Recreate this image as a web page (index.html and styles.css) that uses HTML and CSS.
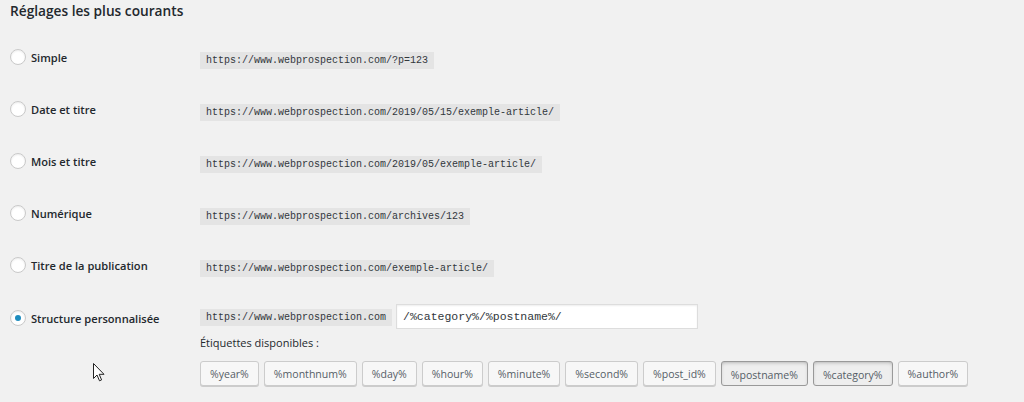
FILE: index.html
```html
<!DOCTYPE html>
<html lang="fr">
<head>
<meta charset="utf-8">
<link rel="stylesheet" href="styles.css">
</head>
<body>
<div class="page">
  <h2 class="title">Réglages les plus courants</h2>
  <div class="rows">
    <div class="row">
      <label class="lbl"><span class="radio"></span>Simple</label>
      <div class="val"><code class="code">https://www.webprospection.com/?p=123</code></div>
    </div>
    <div class="row">
      <label class="lbl"><span class="radio"></span>Date et titre</label>
      <div class="val"><code class="code">https://www.webprospection.com/2019/05/15/exemple-article/</code></div>
    </div>
    <div class="row">
      <label class="lbl"><span class="radio"></span>Mois et titre</label>
      <div class="val"><code class="code">https://www.webprospection.com/2019/05/exemple-article/</code></div>
    </div>
    <div class="row">
      <label class="lbl"><span class="radio"></span>Numérique</label>
      <div class="val"><code class="code">https://www.webprospection.com/archives/123</code></div>
    </div>
    <div class="row">
      <label class="lbl"><span class="radio"></span>Titre de la publication</label>
      <div class="val"><code class="code">https://www.webprospection.com/exemple-article/</code></div>
    </div>
    <div class="row row-custom">
      <label class="lbl"><span class="radio checked"></span>Structure personnalisée</label>
      <div class="val">
        <div class="custom-line">
          <code class="code">https://www.webprospection.com</code>
          <input class="field" type="text" value="/%category%/%postname%/">
        </div>
        <div class="tags-label">Étiquettes disponibles :</div>
        <div class="tags">
          <button class="tag">%year%</button>
          <button class="tag">%monthnum%</button>
          <button class="tag">%day%</button>
          <button class="tag">%hour%</button>
          <button class="tag">%minute%</button>
          <button class="tag">%second%</button>
          <button class="tag">%post_id%</button>
          <button class="tag active">%postname%</button>
          <button class="tag active">%category%</button>
          <button class="tag">%author%</button>
        </div>
      </div>
    </div>
  </div>
  <svg class="cursor" width="12" height="19" viewBox="0 0 12 19">
    <path d="M0.5 0.5 L0.5 15.5 L4 12 L6.5 17.8 L8.6 16.9 L6.2 11.3 L11 11.3 Z" fill="#fff" stroke="#222" stroke-width="1" stroke-linejoin="round"/>
  </svg>
</div>
</body>
</html>
```

FILE: styles.css
```css
* { box-sizing: border-box; }
html, body {
  margin: 0;
  padding: 0;
  background: #f1f1f1;
  width: 1024px;
  height: 402px;
  overflow: hidden;
}
body {
  font-family: "Open Sans", "Noto Sans", sans-serif;
  color: #23282d;
}
.page {
  position: relative;
  padding: 0 0 0 10px;
}
.title {
  margin: 0;
  font-size: 13.7px;
  font-weight: 600;
  line-height: 22px;
  height: 24px;
}
.rows {
  display: flex;
  flex-direction: column;
}
.row {
  display: grid;
  grid-template-columns: 190px 1fr;
  align-items: center;
  height: 52px;
}
.rows .row:first-child { margin-top: 7px; }
.lbl {
  display: flex;
  align-items: center;
  font-size: 11.1px;
  font-weight: 600;
  color: #23282d;
}
.radio {
  width: 16px;
  height: 16px;
  border-radius: 50%;
  border: 1px solid #c9c9c9;
  background: #fff;
  box-shadow: inset 0 1px 2px rgba(0,0,0,0.08);
  margin-right: 5px;
  display: inline-flex;
  align-items: center;
  justify-content: center;
  flex: none;
}
.radio.checked::after {
  content: "";
  width: 6px;
  height: 6px;
  border-radius: 50%;
  background: #1e8cbe;
}
.code {
  display: inline-block;
  font-family: "Liberation Mono", "DejaVu Sans Mono", monospace;
  font-size: 10px;
  line-height: 12px;
  padding: 3px 6px 2px 6px;
  background: #e4e4e4;
  color: #32373c;
}
.row-custom {
  align-items: start;
  height: auto;
  padding-top: 13px;
}
.row-custom .lbl { margin-top: 6px; }
.custom-line {
  display: flex;
  align-items: center;
  gap: 4px;
}
.custom-line .code { margin-top: 2px; }
.field {
  width: 302px;
  height: 25px;
  border: 1px solid #ddd;
  background: #fff;
  box-shadow: inset 0 1px 2px rgba(0,0,0,0.07);
  font-family: "Liberation Mono", "DejaVu Sans Mono", monospace;
  font-size: 11.5px;
  color: #32373c;
  padding: 0 6px;
  margin: 0;
  outline: none;
}
.tags-label {
  font-size: 11px;
  margin-top: 6px;
  line-height: 16px;
  color: #23282d;
}
.tags {
  display: flex;
  gap: 5px;
  margin-top: 10px;
}
.tag {
  height: 25px;
  padding: 0 9px;
  border: 1px solid #cccccc;
  border-radius: 3px;
  background: #f7f7f7;
  box-shadow: 0 1px 0 #ccc;
  font-family: "Open Sans", "Noto Sans", sans-serif;
  font-size: 10.55px;
  color: #555d66;
  margin: 0;
}
.tag.active {
  background: #eeeeee;
  border-color: #999;
  box-shadow: inset 0 2px 5px -3px rgba(0,0,0,0.5);
  padding-top: 2px;
}
.cursor {
  position: absolute;
  left: 93px;
  top: 363px;
}
```
